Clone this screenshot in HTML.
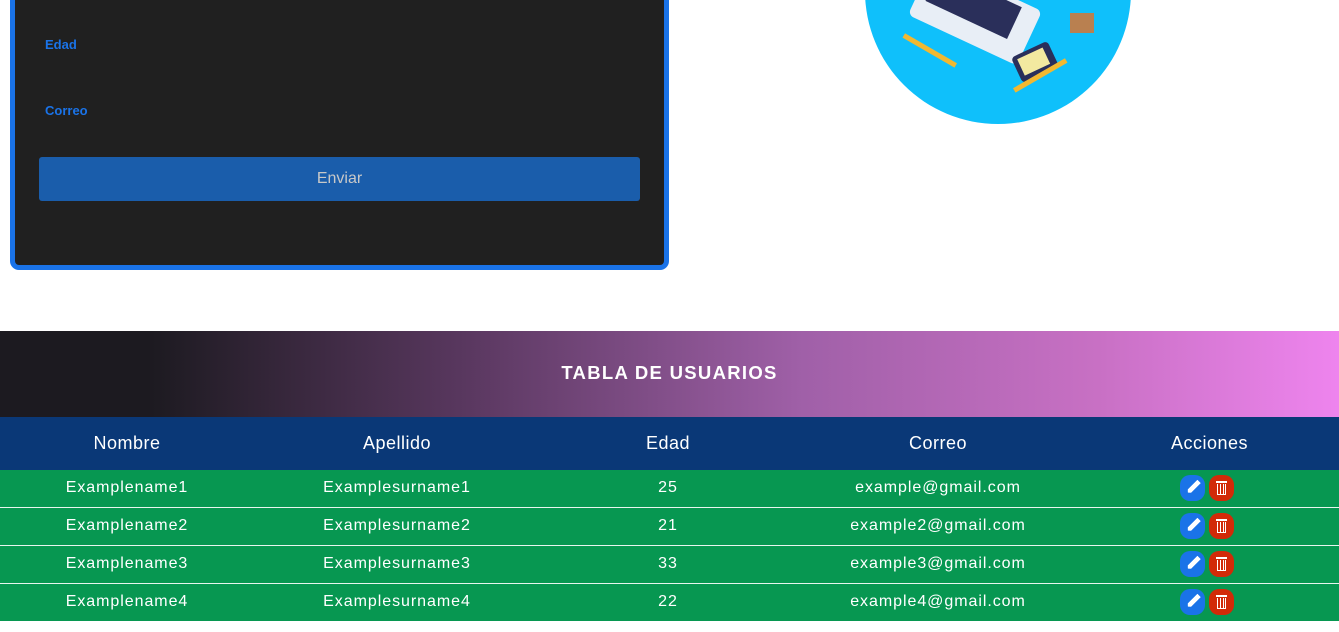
<!DOCTYPE html>
<html><head><meta charset="utf-8"><style>
*{margin:0;padding:0;box-sizing:border-box}
body{width:1339px;height:632px;background:#fff;position:relative;overflow:hidden;font-family:"Liberation Sans",Arial,sans-serif}
.form{position:absolute;left:10px;top:-20px;width:659px;height:290px;background:#202020;border:5px solid #1a73e8;border-radius:9px}
.lbl{position:absolute;left:45px;color:#1a73e8;font-size:13px;font-weight:bold}
.btn{position:absolute;left:39px;top:157px;width:601px;height:44px;background:#1a5dab;border-radius:3px;color:#c8c8c8;font-size:16px;text-align:center;line-height:44px}
.circ{position:absolute;left:865px;top:-142px;width:266px;height:266px;border-radius:50%;background:#0fc0fb;overflow:hidden}
.hdr{position:absolute;left:0;top:331px;width:1339px;height:86px;background:linear-gradient(90deg,#1c1a20 0%,#1c1a20 11%,#5a3860 35%,#a060a8 60%,#c870c4 82%,#ee84ee 100%);color:#fff;font-weight:bold;font-size:18.5px;letter-spacing:1.3px;text-align:center;line-height:84px}
table{position:absolute;left:0;top:417px;width:1339px;border-collapse:collapse;color:#fff}
th{background:#0a3877;height:53px;font-weight:normal;font-size:18px;letter-spacing:.5px}
td{background:#079751;height:38px;text-align:center;font-size:16px;letter-spacing:.95px;border-top:1px solid #e8f5ee}
tr:nth-child(2) td{border-top:none;height:37px}
.ic{display:inline-block;width:25px;height:26px;border-radius:10px;vertical-align:middle;margin:0 2px;position:relative}
.e{background:#1a73e8}.d{background:#d22a08}
.acc{padding-right:6px}
</style></head><body>
<div class="form"></div>
<div class="lbl" style="top:37px">Edad</div>
<div class="lbl" style="top:103px">Correo</div>
<div class="btn">Enviar</div>
<div class="circ">
<svg width="266" height="266" viewBox="0 0 266 266">
<rect x="50" y="125" width="120" height="60" rx="6" fill="#e8eef6" transform="rotate(25 110 155)"/>
<rect x="60" y="130" width="90" height="35" fill="#2a2f5a" transform="rotate(25 110 155)"/>
<rect x="150" y="190" width="40" height="28" rx="4" fill="#2a2f5a" transform="rotate(-25 170 204)"/>
<rect x="155" y="194" width="28" height="18" fill="#f3e9a0" transform="rotate(-25 170 204)"/>
<rect x="205" y="155" width="24" height="20" fill="#b98050"/>
<rect x="35" y="190" width="60" height="5" fill="#f2b830" transform="rotate(30 65 192)"/>
<rect x="145" y="215" width="60" height="5" fill="#f2b830" transform="rotate(-30 175 217)"/>
</svg>
</div>
<div class="hdr">TABLA DE USUARIOS</div>
<table>
<tr><th style="width:254px">Nombre</th><th style="width:286px">Apellido</th><th style="width:256px">Edad</th><th style="width:284px">Correo</th><th>Acciones</th></tr>
<tr><td>Examplename1</td><td>Examplesurname1</td><td>25</td><td>example@gmail.com</td><td class="acc"><span class="ic e"></span><span class="ic d"></span></td></tr>
<tr><td>Examplename2</td><td>Examplesurname2</td><td>21</td><td>example2@gmail.com</td><td class="acc"><span class="ic e"></span><span class="ic d"></span></td></tr>
<tr><td>Examplename3</td><td>Examplesurname3</td><td>33</td><td>example3@gmail.com</td><td class="acc"><span class="ic e"></span><span class="ic d"></span></td></tr>
<tr><td>Examplename4</td><td>Examplesurname4</td><td>22</td><td>example4@gmail.com</td><td class="acc"><span class="ic e"></span><span class="ic d"></span></td></tr>
</table>
<style>
.e::after{content:"";position:absolute;left:11px;top:4px;width:5px;height:16px;background:#fff;transform:rotate(45deg);clip-path:polygon(0 0,100% 0,100% 85%,50% 100%,0 85%)}
.d::before{content:"";position:absolute;left:7px;top:6px;width:11px;height:2px;background:#fff}
.d::after{content:"";position:absolute;left:8px;top:9px;width:7px;height:10px;border:1.5px solid #fff;border-top:none;background:repeating-linear-gradient(90deg,transparent 0 2px,#fff 2px 3px)}
</style>
</body></html>
